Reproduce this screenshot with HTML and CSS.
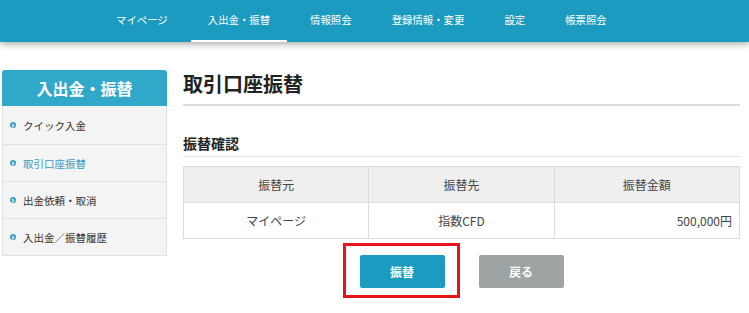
FILE: index.html
```html
<!DOCTYPE html>
<html lang="ja">
<head>
<meta charset="utf-8">
<link rel="stylesheet" href="styles.css">
</head>
<body>
<header class="topbar">
  <nav class="nav">
    <a class="nav-item">マイページ</a>
    <a class="nav-item active">入出金・振替</a>
    <a class="nav-item">情報照会</a>
    <a class="nav-item">登録情報・変更</a>
    <a class="nav-item">設定</a>
    <a class="nav-item">帳票照会</a>
  </nav>
</header>
<div class="page">
  <aside class="side">
    <div class="side-head">入出金・振替</div>
    <ul class="side-list">
      <li class="side-item"><span class="dot"></span>クイック入金</li>
      <li class="side-item current"><span class="dot"></span>取引口座振替</li>
      <li class="side-item"><span class="dot"></span>出金依頼・取消</li>
      <li class="side-item"><span class="dot"></span>入出金／振替履歴</li>
    </ul>
  </aside>
  <main class="main">
    <h1 class="title">取引口座振替</h1>
    <h2 class="subtitle">振替確認</h2>
    <table class="tbl">
      <thead>
        <tr><th>振替元</th><th>振替先</th><th>振替金額</th></tr>
      </thead>
      <tbody>
        <tr><td class="c">マイページ</td><td class="c">指数CFD</td><td class="r">500,000円</td></tr>
      </tbody>
    </table>
    <div class="actions">
      <span class="hl"><button class="btn btn-primary">振替</button></span>
      <button class="btn btn-gray">戻る</button>
    </div>
  </main>
</div>
</body>
</html>
```

FILE: styles.css
```css
* { box-sizing: border-box; }
html, body { margin: 0; padding: 0; background: #fff; }
body {
  font-family: "Noto Sans CJK JP", "Noto Sans", "Liberation Sans", sans-serif;
  color: #333;
  min-height: 313px;
}
.topbar {
  height: 42px;
  background: #1b9bc0;
  box-shadow: 0 2px 7px rgba(0,0,0,0.35);
  position: relative;
  z-index: 1;
}
.nav {
  display: flex;
  height: 42px;
  padding-left: 96px;
}
.nav-item {
  display: flex;
  align-items: center;
  padding: 0 17px 2px;
  margin: 0 3px;
  color: #fff;
  font-size: 10.4px;
  text-decoration: none;
  border-bottom: 2px solid transparent;
}
.nav-item.active { border-bottom-color: #fff; }

.page {
  display: flex;
  padding: 28px 9px 30px 2px;
  align-items: flex-start;
}
.side {
  width: 165px;
  flex: none;
}
.side-head {
  height: 36px;
  background: #31a8ca;
  color: #fff;
  font-weight: bold;
  font-size: 16px;
  display: flex;
  align-items: center;
  justify-content: center;
  border-radius: 3px 3px 0 0;
}
.side-list {
  list-style: none;
  margin: 0;
  padding: 0;
  border: 1px solid #dde2e5;
  border-top: none;
  background: #f4f4f4;
}
.side-item {
  height: 37px;
  display: flex;
  align-items: center;
  padding-left: 7px;
  font-size: 10.5px;
  color: #333;
  border-top: 1px solid #dde2e5;
}
.side-item:first-child { border-top: none; height: 38px; }
.side-item.current { color: #3a9cc4; }
.dot {
  width: 6px;
  height: 6px;
  border-radius: 50%;
  background: #2f9fc6;
  margin-right: 7px;
  position: relative;
}
.dot::after {
  content: "";
  position: absolute;
  left: 1px;
  top: 1.8px;
  width: 1.6px;
  height: 1.6px;
  border-top: 1px solid #fff;
  border-right: 1px solid #fff;
  transform: rotate(45deg);
}

.main {
  margin-left: 16px;
  flex: 1;
}
.title {
  margin: 0;
  font-size: 20px;
  line-height: 28px;
  font-weight: bold;
  color: #222;
  padding-bottom: 6px;
  border-bottom: 2px solid #d8dde1;
}
.subtitle {
  margin: 27px 0 0;
  font-size: 14px;
  line-height: 20px;
  font-weight: bold;
  color: #222;
  padding-bottom: 3px;
  border-bottom: 1px solid #dde1e4;
}
.tbl {
  width: 100%;
  margin-top: 9px;
  border-collapse: collapse;
  table-layout: fixed;
  font-size: 12px;
  color: #444;
}
.tbl th, .tbl td {
  border: 1px solid #dcdcdc;
  height: 36px;
  padding: 0 7px;
  font-weight: normal;
}
.tbl th { background: #efefef; text-align: center; }
.tbl td.c { text-align: center; }
.tbl td.r { text-align: right; }

.actions {
  display: flex;
  justify-content: center;
  gap: 34px;
  margin-top: 16px;
}
.hl { position: relative; display: flex; }
.hl::after {
  content: "";
  position: absolute;
  left: -17px;
  right: -15px;
  top: -12px;
  bottom: -10px;
  border: 3px solid #e8141a;
  pointer-events: none;
}
.btn {
  width: 85px;
  height: 33px;
  border: none;
  border-radius: 2px;
  color: #fff;
  font-family: inherit;
  font-weight: bold;
  font-size: 12px;
}
.btn-primary { background: #1b9bc0; }
.btn-gray { background: #9ea3a3; }
```
